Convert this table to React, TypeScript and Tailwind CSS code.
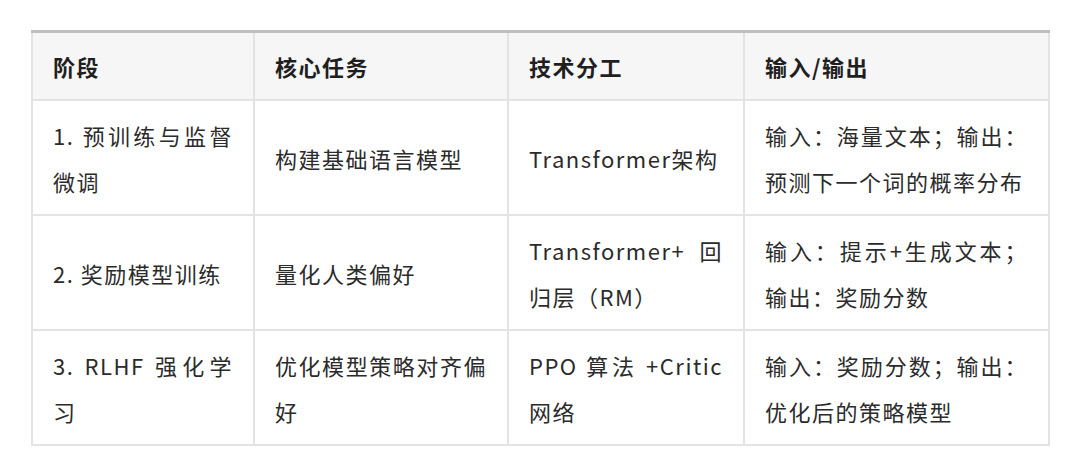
const rows = [
  {
    stage: "1. 预训练与监督微调",
    task: "构建基础语言模型",
    tech: "Transformer架构",
    io: "输入：海量文本；输出：预测下一个词的概率分布",
  },
  {
    stage: "2. 奖励模型训练",
    task: "量化人类偏好",
    tech: "Transformer+ 回归层（RM）",
    io: "输入：提示+生成文本；输出：奖励分数",
  },
  {
    stage: "3. RLHF 强化学习",
    task: "优化模型策略对齐偏好",
    tech: "PPO 算法 +Critic 网络",
    io: "输入：奖励分数；输出：优化后的策略模型",
  },
];

const headers = ["阶段", "核心任务", "技术分工", "输入/输出"];

export default function App() {
  return (
    <div className="min-h-[467px] w-[1080px] bg-white pl-[31px] pt-[30px] font-['Noto_Sans_CJK_SC','Noto_Sans',sans-serif]">
      <table className="w-[1017px] table-fixed border-collapse text-[22px] leading-[46px] tracking-[1.5px]">
        <colgroup>
          <col className="w-[222px]" />
          <col className="w-[254px]" />
          <col className="w-[236px]" />
          <col className="w-[305px]" />
        </colgroup>
        <thead>
          <tr className="bg-[#f6f6f6]">
            {headers.map((h) => (
              <th
                key={h}
                className="border-2 border-t-[3px] border-[#e3e3e3] border-t-[#bfbfbf] px-[20px] py-[10px] text-left align-middle font-bold text-[#1f1f1f]"
              >
                {h}
              </th>
            ))}
          </tr>
        </thead>
        <tbody>
          {rows.map((row) => (
            <tr key={row.stage}>
              {[row.stage, row.task, row.tech, row.io].map((cell, i) => (
                <td
                  key={i}
                  className="border-2 border-[#e3e3e3] px-[20px] py-[10.5px] text-justify align-middle text-[#2b2b2b]"
                >
                  {cell}
                </td>
              ))}
            </tr>
          ))}
        </tbody>
      </table>
    </div>
  );
}
